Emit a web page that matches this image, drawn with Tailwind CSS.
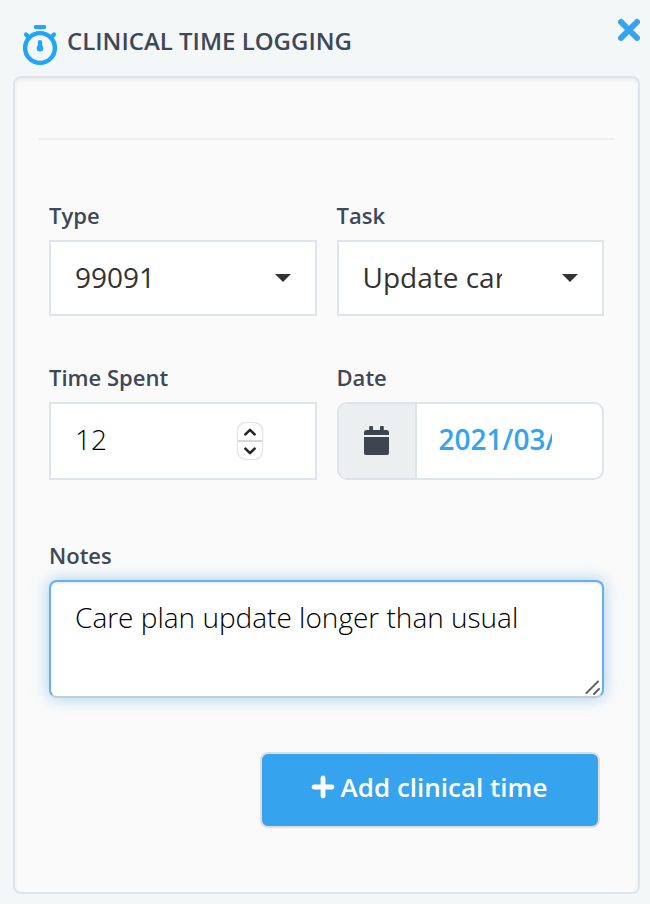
<!DOCTYPE html>
<html lang="en">
  <head>
    <meta charset="UTF-8" />
    <meta name="viewport" content="width=device-width, initial-scale=1.0" />
    <title>Clinical Time Logging</title>
    <script src="https://cdn.jsdelivr.net/npm/@tailwindcss/browser@4"></script>
  </head>
  <body class="min-h-screen bg-[#f3f7f8] font-['Open_Sans',sans-serif] text-[#3e4856]">
    <div class="flex min-h-screen flex-col pr-[10px] pb-[10px] pl-[13px]">
      <!-- Header -->
      <header class="flex h-[76px] items-start justify-between pl-2">
        <div class="flex items-start gap-2 pt-6">
          <svg class="h-[42px] w-[38px]" viewBox="0 0 38 42" fill="none" stroke="#20a5f7" stroke-linecap="round" aria-hidden="true">
            <circle cx="19" cy="24" r="14.9" stroke-width="4.4" />
            <path d="M14.8 3.1h8.4" stroke-width="4.2" />
            <path d="M5 10.6l2.4 2.4M33 10.6l-2.4 2.4" stroke-width="4.2" />
            <path d="M19 18.2v6" stroke-width="4.2" />
            <circle cx="19" cy="24.2" r="3.3" fill="#20a5f7" stroke="none" />
          </svg>
          <h1 class="text-2xl leading-[34px] font-semibold">CLINICAL TIME LOGGING</h1>
        </div>
        <button type="button" aria-label="Close" class="pt-[18px]">
          <svg class="size-6" viewBox="0 0 24 24" fill="none" stroke="#35a3ed" stroke-width="6" stroke-linecap="round" aria-hidden="true">
            <path d="M5 4l16 16M21 4L5 20" />
          </svg>
        </button>
      </header>

      <!-- Card -->
      <main class="flex-1 rounded-lg border-2 border-[#dfe4ea] bg-[#fafafa] px-6 pt-[60px] pb-16 shadow-[inset_0_2px_4px_rgba(0,0,0,0.06)]">
        <hr class="border-t-2 border-[#eceeef]" />

        <form class="px-[10px] pt-[60px]">
          <div class="grid grid-cols-2 gap-x-5 gap-y-[46px]">
            <div>
              <label for="type" class="mb-[10px] block text-[22px] leading-[30px] font-semibold">Type</label>
              <div class="relative">
                <select id="type" class="h-[76px] w-full appearance-none border-2 border-[#dfe4ea] bg-white pr-[100px] pb-[2px] pl-6 text-[28px] text-[#333]">
                  <option>99091</option>
                </select>
                <svg class="pointer-events-none absolute top-[34px] right-[26px] h-2 w-4" viewBox="0 0 16 8" fill="#333" aria-hidden="true">
                  <path d="M0 0h16L8 8z" />
                </svg>
              </div>
            </div>

            <div>
              <label for="task" class="mb-[10px] block text-[22px] leading-[30px] font-semibold">Task</label>
              <div class="relative">
                <select id="task" class="h-[76px] w-full appearance-none border-2 border-[#dfe4ea] bg-white pr-[100px] pb-[2px] pl-6 text-[28px] text-[#333]">
                  <option>Update care plan</option>
                </select>
                <svg class="pointer-events-none absolute top-[34px] right-[26px] h-2 w-4" viewBox="0 0 16 8" fill="#333" aria-hidden="true">
                  <path d="M0 0h16L8 8z" />
                </svg>
              </div>
            </div>

            <div>
              <label for="time" class="mb-[10px] block text-[22px] leading-[30px] font-semibold">Time Spent</label>
              <div class="relative">
                <input
                  type="number"
                  id="time"
                  value="12"
                  class="h-[78px] w-full appearance-none border-2 border-[#dfe4ea] bg-white pr-20 pb-1 pl-6 text-[28px] font-light text-black [appearance:textfield]"
                />
                <div class="absolute top-[21px] right-[55px] flex h-9 w-6 flex-col overflow-hidden rounded-lg bg-white shadow-[0_0_2px_rgba(0,0,0,0.4)]">
                  <button type="button" aria-label="Increase" onclick="time.stepUp()" class="flex flex-1 items-center justify-center border-b-2 border-[#d8d8d8]">
                    <svg class="h-2 w-3" viewBox="0 0 12 8" fill="none" stroke="#262626" stroke-width="2.6" stroke-linecap="round" stroke-linejoin="round" aria-hidden="true">
                      <path d="M1.4 6.4L6 1.8l4.6 4.6" />
                    </svg>
                  </button>
                  <button type="button" aria-label="Decrease" onclick="time.stepDown()" class="flex flex-1 items-center justify-center">
                    <svg class="h-2 w-3" viewBox="0 0 12 8" fill="none" stroke="#262626" stroke-width="2.6" stroke-linecap="round" stroke-linejoin="round" aria-hidden="true">
                      <path d="M1.4 1.6L6 6.2l4.6-4.6" />
                    </svg>
                  </button>
                </div>
              </div>
            </div>

            <div>
              <label for="date" class="mb-[10px] block text-[22px] leading-[30px] font-semibold">Date</label>
              <div class="flex h-[78px] overflow-hidden rounded-[10px] border-2 border-[#dfe4ea] bg-white">
                <div class="flex w-[78px] shrink-0 items-center justify-center border-r-2 border-[#dfe4ea] bg-[#ebeff0] pb-[2px]">
                  <svg class="h-[29px] w-[25px]" viewBox="0 0 25 29" fill="#3e4450" aria-hidden="true">
                    <path d="M0 9V6.6Q0 4 2.6 4H5.2V1Q5.2 0 6.2 0H8Q9 0 9 1V4H16V1Q16 0 17 0H18.8Q19.8 0 19.8 1V4H22.4Q25 4 25 6.6V9Z" />
                    <path d="M0 11H25V26.4Q25 29 22.4 29H2.6Q0 29 0 26.4Z" />
                  </svg>
                </div>
                <input
                  type="text"
                  id="date"
                  value="2021/03/15"
                  class="min-w-0 flex-1 pr-[50px] pb-1 pl-[22px] text-[28px] font-semibold text-[#35a3ed]"
                />
              </div>
            </div>
          </div>

          <!-- Notes -->
          <div class="mt-[60px]">
            <label for="notes" class="mb-[10px] block text-[22px] leading-[30px] font-semibold">Notes</label>
            <div class="relative">
              <textarea
                id="notes"
                class="block h-[118px] w-full resize-none rounded-lg border-2 border-[#66afe9] border-b-[#c2cfd6] bg-white px-6 py-4 text-[28px] leading-[38px] font-light text-black shadow-[inset_0_2px_2px_rgba(0,0,0,0.07),0_0_16px_rgba(102,175,233,0.6)] outline-none"
              >Care plan update longer than usual</textarea>
              <svg class="pointer-events-none absolute right-1 bottom-[2px] size-4" viewBox="0 0 16 16" fill="none" stroke="#636363" stroke-width="2" stroke-linecap="round" aria-hidden="true">
                <path d="M2.5 13L14 1.5M10 14l5-5" />
              </svg>
            </div>
          </div>

          <div class="mt-[54px] flex justify-end pr-1">
            <button type="submit" class="flex h-[76px] w-[340px] items-center justify-center gap-[6px] rounded-lg border-2 border-[#dcdee0] bg-[#35a3ed] pr-[2px] pb-[6px] text-[26px] font-semibold text-white">
              <svg class="size-6" viewBox="0 0 24 24" fill="none" stroke="currentColor" stroke-width="4.8" stroke-linecap="round" aria-hidden="true">
                <path d="M12 3v18M3 12h18" />
              </svg>
              Add clinical time
            </button>
          </div>
        </form>
      </main>
    </div>
    <script>
      const time = document.getElementById("time");
    </script>
  </body>
</html>
